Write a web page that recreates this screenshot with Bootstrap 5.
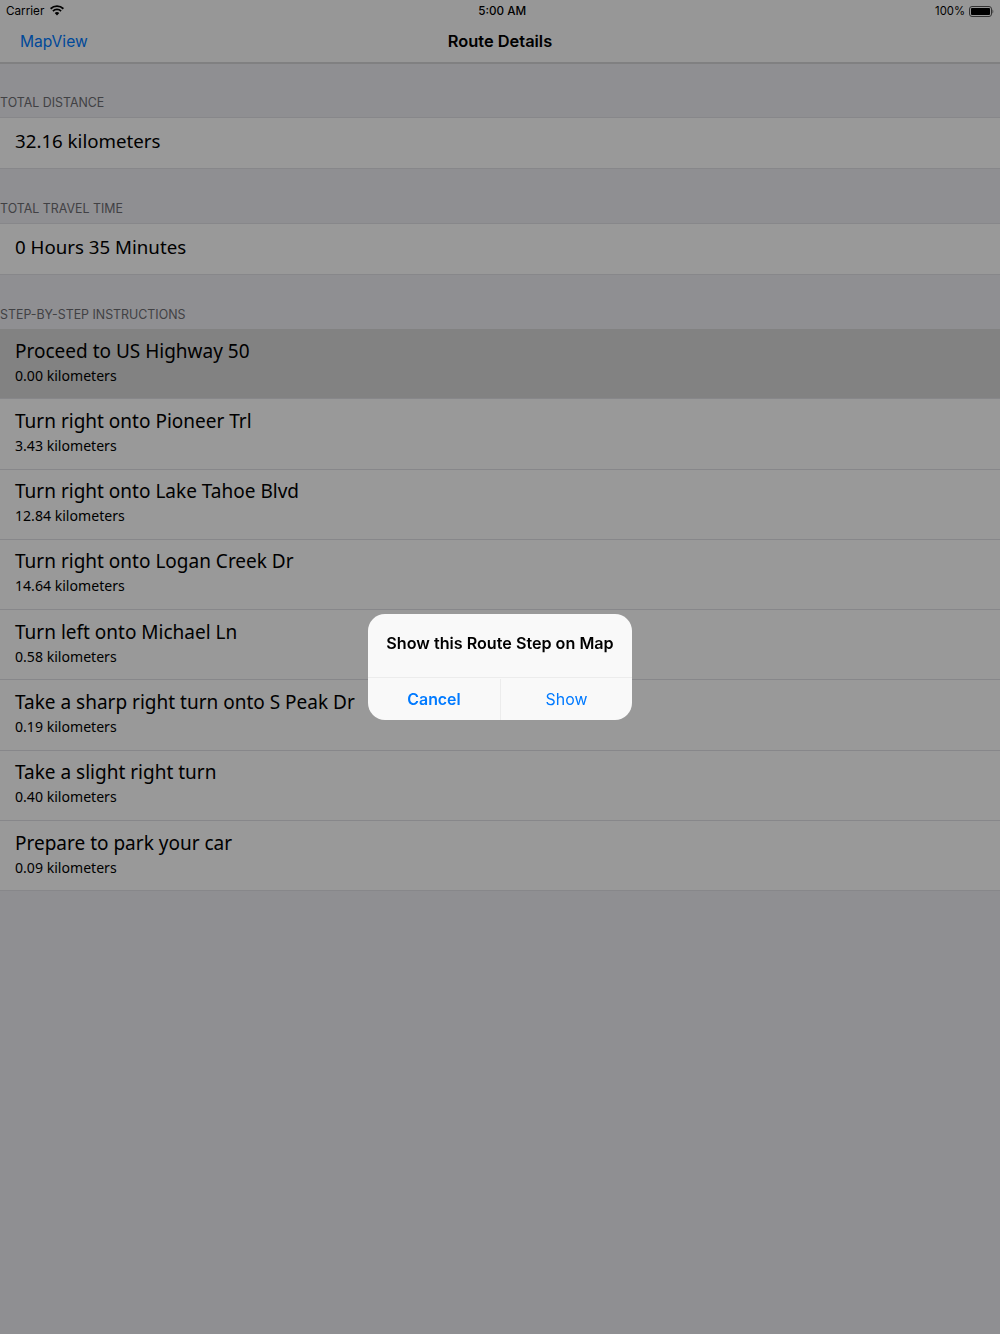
<!DOCTYPE html>
<html lang="en">
<head>
    <meta charset="UTF-8">
    <meta name="viewport" content="width=device-width, initial-scale=1.0">
    <title>Route Details</title>
    <link href="https://cdn.jsdelivr.net/npm/bootstrap@5.3.0/dist/css/bootstrap.min.css" rel="stylesheet">
    <style>
        body { background: #efeff4; font-family: "Noto Sans", sans-serif; color: #000; height: 1334px; overflow: hidden; }
        .ui-font { font-family: Inter, sans-serif; }
        .status-bar { height: 20px; background: #fcfcfc; font-size: 11.7px; padding: 2px 6px 0; }
        .status-bar span { padding-top: 1px; }
        .status-time { font-weight: 500; margin-left: 5px; }
        .status-pct { font-size: 11.3px; margin-top: -1px; }
        .wifi-glyph { margin: -1px 0 0 -2px; }
        .top-bar { height: 44px; background: #fcfcfc; border-bottom: 2px solid #d6d6d8; padding: 1px 20px 0; }
        .top-bar a { color: #007aff; font-size: 15.6px; text-decoration: none; }
        .top-title { font-size: 16.4px; font-weight: 600; }
        .group-head { height: 54px; padding: 0 1px 4px 0; font-size: 12.4px; color: #6d6d72; }
        .group-head.first { height: 53px; }
        .plain-row { background: #fff; height: 52px; padding: 0 15px 3px; font-size: 18.7px; border-top: 1px solid #e2e2e6; border-bottom: 1px solid #e2e2e6; }
        .step-row { background: #fff; height: 70.3px; padding: 7.5px 15px 0; border-bottom: 1px solid #e2e2e6; }
        .step-row.picked { background: #d9d9d9; }
        .step-title { font-size: 19px; line-height: 28px; }
        .step-dist { font-size: 14.1px; line-height: 22px; }
        .dim-layer { background: rgba(0, 0, 0, .4); z-index: 10; }
        .alert-box { width: 264px; background: #f9f9f9; border-radius: 17px; overflow: hidden; }
        .alert-title { height: 63px; padding-bottom: 4px; font-size: 16.15px; font-weight: 600; }
        .alert-actions { height: 43px; padding-top: 1px; border-top: 1px solid #ececec; }
        .alert-actions div { color: #007aff; font-size: 15.9px; }
        .alert-actions div + div { border-left: 1px solid #ececec; }
    </style>
</head>
<body>
    <div class="status-bar ui-font d-flex justify-content-between align-items-center">
        <div class="d-flex align-items-center gap-2">
            <span>Carrier</span>
            <svg class="wifi-glyph" width="14" height="11" viewBox="0 0 14 11"><path d="M7 10.500 4.700 8a3.300 3.300 0 0 1 4.600 0zM3.500 6.800 2.300 5.500a6.800 6.800 0 0 1 9.400 0l-1.200 1.300a5 5 0 0 0-7 0zM1.200 4.400 0 3.100a10 10 0 0 1 14 0l-1.200 1.300a8.300 8.300 0 0 0-11.600 0z"/></svg>
        </div>
        <span class="status-time">5:00 AM</span>
        <div class="d-flex align-items-center gap-1">
            <span class="status-pct">100%</span>
            <svg width="25" height="11" viewBox="0 0 25 11"><rect x=".5" y=".5" width="22" height="10" rx="2.500" fill="none" stroke="#555"/><rect x="2" y="2" width="19" height="7" rx="1"/><path d="M23.500 3.500c1 .3 1 3.700 0 4z" fill="#555"/></svg>
        </div>
    </div>
    <div class="top-bar ui-font position-relative d-flex align-items-center justify-content-center">
        <a href="#" class="position-absolute start-0 ms-3 ps-1">MapView</a>
        <span class="top-title">Route Details</span>
    </div>

    <div class="group-head first d-flex align-items-end ui-font">TOTAL DISTANCE</div>
    <div class="plain-row d-flex align-items-center">32.16 kilometers</div>
    <div class="group-head d-flex align-items-end ui-font">TOTAL TRAVEL TIME</div>
    <div class="plain-row d-flex align-items-center">0 Hours 35 Minutes</div>
    <div class="group-head d-flex align-items-end ui-font">STEP-BY-STEP INSTRUCTIONS</div>

    <div class="step-row picked"><div class="step-title">Proceed to US Highway 50</div><div class="step-dist">0.00 kilometers</div></div>
    <div class="step-row"><div class="step-title">Turn right onto Pioneer Trl</div><div class="step-dist">3.43 kilometers</div></div>
    <div class="step-row"><div class="step-title">Turn right onto Lake Tahoe Blvd</div><div class="step-dist">12.84 kilometers</div></div>
    <div class="step-row"><div class="step-title">Turn right onto Logan Creek Dr</div><div class="step-dist">14.64 kilometers</div></div>
    <div class="step-row"><div class="step-title">Turn left onto Michael Ln</div><div class="step-dist">0.58 kilometers</div></div>
    <div class="step-row"><div class="step-title">Take a sharp right turn onto S Peak Dr</div><div class="step-dist">0.19 kilometers</div></div>
    <div class="step-row"><div class="step-title">Take a slight right turn</div><div class="step-dist">0.40 kilometers</div></div>
    <div class="step-row"><div class="step-title">Prepare to park your car</div><div class="step-dist">0.09 kilometers</div></div>

    <div class="dim-layer position-fixed top-0 start-0 w-100 h-100 d-flex align-items-center justify-content-center">
        <div class="alert-box ui-font">
            <div class="alert-title d-flex align-items-center justify-content-center">Show this Route Step on Map</div>
            <div class="alert-actions d-flex">
                <div class="w-50 d-flex align-items-center justify-content-center fw-semibold">Cancel</div>
                <div class="w-50 d-flex align-items-center justify-content-center">Show</div>
            </div>
        </div>
    </div>

    <script src="https://cdn.jsdelivr.net/npm/bootstrap@5.3.0/dist/js/bootstrap.bundle.min.js"></script>
</body>
</html>
